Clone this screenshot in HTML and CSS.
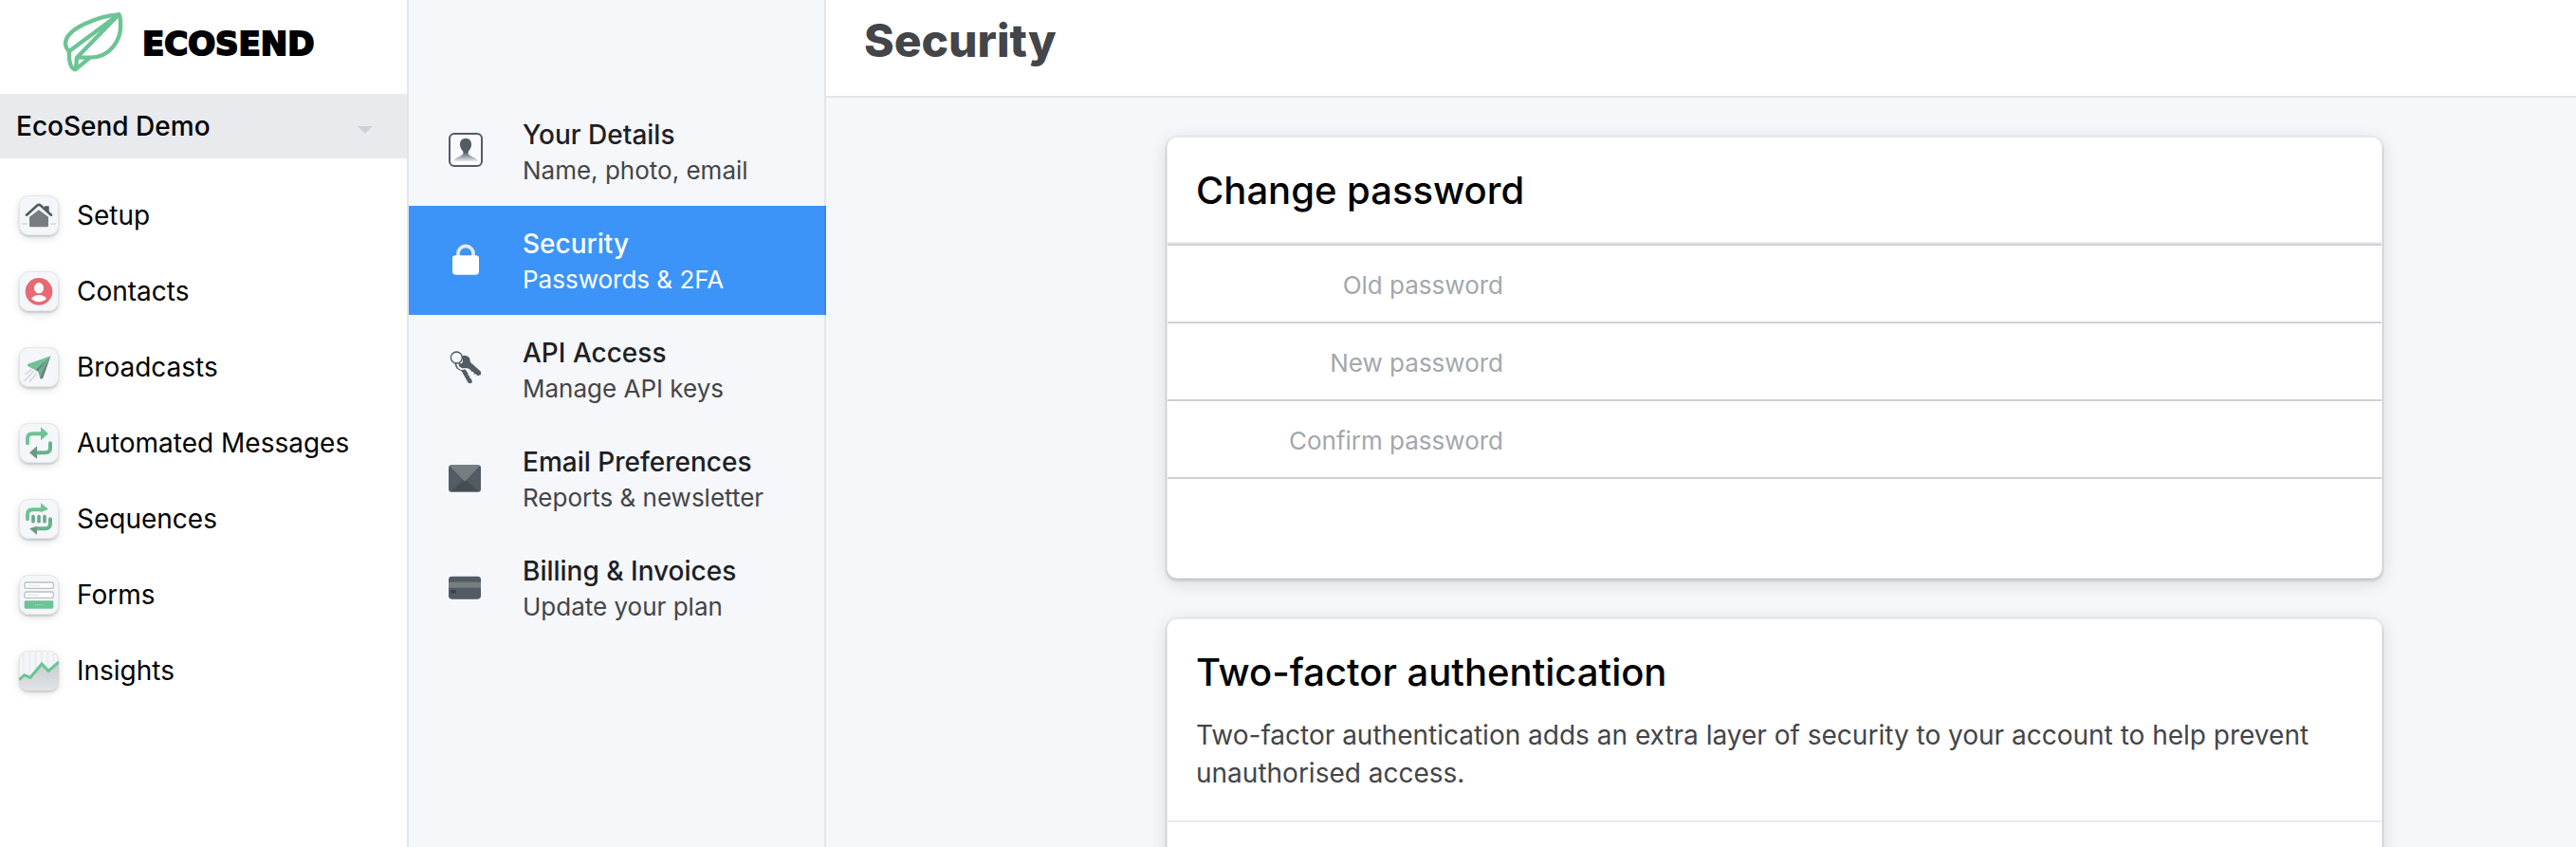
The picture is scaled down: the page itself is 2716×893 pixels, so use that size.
FILE: index.html
```html
<!DOCTYPE html>
<html lang="en">
<head>
    <meta charset="UTF-8">
    <meta name="viewport" content="width=device-width, initial-scale=1.0">
    <title>Security - EcoSend</title>
    <link rel="stylesheet" href="styles.css">
</head>
<body>
    <aside class="sidebar">
        <a href="#" class="logo">
            <svg class="logo-leaf" viewBox="198 32 192 192" aria-hidden="true">
                <path d="M376 42C318 46 206 84 207 135C208 148 214 154 219 160C217 186 223 214 238 216L285 178C346 178 386 124 381 68C381 54 379 46 376 42Z"/>
                <path d="M219 158L376 42L243 178H285M243 178L240 214"/>
            </svg>
            <span class="logo-text">ECOSEND</span>
        </a>

        <button type="button" class="account">
            <span>EcoSend Demo</span>
            <span class="caret"></span>
        </button>

        <nav class="main-nav">
            <a href="#">
                <svg class="tile" viewBox="0 0 126 126" aria-hidden="true">
                    <path d="M9 90H26M100 90H117" stroke="#cfd5d8" stroke-width="5"/>
                    <path d="M33 68L63 46L93 68V96Q93 100 89 100H37Q33 100 33 96Z" fill="#767e80"/>
                    <path d="M24 62L57 32Q63 27 69 32L102 62" fill="none" stroke="#535b65" stroke-width="8" stroke-linecap="round"/>
                    <path d="M81 34H95V54L81 42Z" fill="#535b65"/>
                </svg>
                Setup
            </a>
            <a href="#">
                <svg class="tile" viewBox="0 0 126 126" aria-hidden="true">
                    <circle cx="63" cy="64" r="43" fill="#e66a74"/>
                    <ellipse cx="63" cy="53" rx="15" ry="17" fill="#fff"/>
                    <path d="M39 86Q46 76 63 75Q80 76 87 86Q78 96 63 97Q48 96 39 86Z" fill="#fff"/>
                </svg>
                Contacts
            </a>
            <a href="#">
                <svg class="tile" viewBox="0 0 126 126" aria-hidden="true">
                    <path d="M40 70L20 86M46 76L16 108M56 84L32 110" stroke="#d5d9dd" stroke-width="5"/>
                    <path d="M100 28L27 54Q25 58 29 61L51 72Z" fill="#6cc495"/>
                    <path d="M100 28L51 72L62 78Z" fill="#767e80"/>
                    <path d="M100 28L60 76L67 98Q71 103 76 97Z" fill="#64b58c"/>
                    <path d="M100 28L72 82L67 98Q71 103 76 97Z" fill="#767e80"/>
                </svg>
                Broadcasts
            </a>
            <a href="#">
                <svg class="tile" viewBox="0 0 126 126" aria-hidden="true">
                    <path d="M27 64V50Q27 34 43 34H70" fill="none" stroke="#6cc495" stroke-width="12" stroke-linecap="round"/>
                    <path d="M69 13L93 34L69 55Z" fill="#6cc495"/>
                    <path d="M99 64V78Q99 94 83 94H56" fill="none" stroke="#67b38c" stroke-width="12" stroke-linecap="round"/>
                    <path d="M57 73L33 94L57 114Z" fill="#6f9986"/>
                </svg>
                Automated Messages
            </a>
            <a href="#">
                <svg class="tile" viewBox="0 0 126 126" aria-hidden="true">
                    <path d="M27 64V50Q27 34 43 34H70" fill="none" stroke="#6cc495" stroke-width="12" stroke-linecap="round"/>
                    <path d="M69 13L93 33L69 42Z" fill="#6cc495"/>
                    <path d="M99 64V78Q99 94 83 94H56" fill="none" stroke="#67b38c" stroke-width="12" stroke-linecap="round"/>
                    <path d="M57 86L33 94L57 114Z" fill="#6f9986"/>
                    <path d="M45 56V71M63 56V71M81 56V71" stroke="#6fa78b" stroke-width="11" stroke-linecap="round"/>
                </svg>
                Sequences
            </a>
            <a href="#">
                <svg class="tile" viewBox="0 0 126 126" aria-hidden="true">
                    <rect x="18" y="24" width="91" height="19" rx="5" fill="#fff" stroke="#b8c0c3" stroke-width="4"/>
                    <rect x="18" y="54" width="91" height="19" rx="5" fill="#fff" stroke="#b8c0c3" stroke-width="4"/>
                    <path d="M27 34H68M27 64H62" stroke="#e8e9ec" stroke-width="5"/>
                    <rect x="17" y="82" width="92" height="25" rx="4" fill="#6cc495"/>
                    <path d="M50 95H79" stroke="#c4e6d4" stroke-width="3" stroke-dasharray="3 4"/>
                </svg>
                Forms
            </a>
            <a href="#">
                <svg class="tile" viewBox="0 0 126 126" aria-hidden="true">
                    <defs>
                        <linearGradient id="chart-area" x1="0" y1="0" x2="0" y2="1">
                            <stop offset="0" stop-color="#c6cbcd"/>
                            <stop offset="1" stop-color="#e2e4e6"/>
                        </linearGradient>
                    </defs>
                    <path d="M15 0V126M34 0V126M53 0V126M72 0V126M91 0V126M110 0V126" stroke="#eceef1" stroke-width="8"/>
                    <path d="M0 92L17 77L36 85L72 42L93 64L126 36V126H0Z" fill="url(#chart-area)"/>
                    <path d="M0 92L17 77L36 85L72 42L93 64L126 36" fill="none" stroke="#6cc495" stroke-width="9"/>
                </svg>
                Insights
            </a>
        </nav>
    </aside>

    <nav class="settings-nav">
        <a href="#">
            <svg class="nav-icon" viewBox="0 0 108 120" aria-hidden="true">
                <defs>
                    <linearGradient id="shoulders" x1="0" y1="0" x2="0" y2="1">
                        <stop offset="0.6" stop-color="#535b65"/>
                        <stop offset="1" stop-color="#535b65" stop-opacity="0.1"/>
                    </linearGradient>
                </defs>
                <rect x="3" y="3" width="102" height="102" rx="15" fill="#f9fafc" stroke="#535b65" stroke-width="6"/>
                <path d="M54 18C42 18 35 26 36 39C37 49 42 55 46 59V67Q42 73 30 77Q18 80 18 90H90Q90 80 78 77Q66 73 62 67V59C66 55 71 49 72 39C73 26 66 18 54 18Z" fill="url(#shoulders)"/>
            </svg>
            <span class="nav-text"><strong>Your Details</strong><small>Name, photo, email</small></span>
        </a>
        <a href="#" class="active">
            <svg class="nav-icon" viewBox="0 0 108 120" aria-hidden="true">
                <path d="M30 46V37A24 24 0 0 1 78 37V46" fill="none" stroke="#e3ecf7" stroke-width="11"/>
                <rect x="12" y="43" width="84" height="61" rx="10" fill="#fff"/>
            </svg>
            <span class="nav-text"><strong>Security</strong><small>Passwords &amp; 2FA</small></span>
        </a>
        <a href="#">
            <svg class="nav-icon" viewBox="0 0 108 120" aria-hidden="true">
                <path d="M36 60L52 57L62 72L61 76L66 79L66 84L71 88L75 98L70 103L62 101L42 65Z" fill="#535b65"/>
                <path d="M22 36Q22 55 38 60" fill="none" stroke="#535b65" stroke-width="5"/>
                <path d="M40 17Q56 10 66 22L69 36L102 65V75L92 79L86 73L82 74L78 66L72 65L69 59L60 55Q44 60 33 48L31 38L42 40Q49 31 40 17Z" fill="#535b65"/>
                <circle cx="25" cy="21" r="18" fill="none" stroke="#535b65" stroke-width="4"/>
                <path d="M29 43Q29 55 40 58L58 56" fill="none" stroke="#f5f7fb" stroke-width="4"/>
            </svg>
            <span class="nav-text"><strong>API Access</strong><small>Manage API keys</small></span>
        </a>
        <a href="#">
            <svg class="nav-icon" viewBox="0 0 108 120" aria-hidden="true">
                <rect x="0" y="16" width="102" height="85" rx="9" fill="#535b65"/>
                <path d="M8 98L51 60L94 98Z" fill="#464c52"/>
                <path d="M4 19Q7 16 11 16H91Q95 16 98 19L51 68Z" fill="#767e80"/>
            </svg>
            <span class="nav-text"><strong>Email Preferences</strong><small>Reports &amp; newsletter</small></span>
        </a>
        <a href="#">
            <svg class="nav-icon" viewBox="0 0 108 120" aria-hidden="true">
                <rect x="0" y="23" width="102" height="72" rx="10" fill="#535b65"/>
                <rect x="0" y="41" width="102" height="18" fill="#767e80"/>
                <rect x="6" y="65" width="18" height="12" rx="6" fill="#3c3f42"/>
            </svg>
            <span class="nav-text"><strong>Billing &amp; Invoices</strong><small>Update your plan</small></span>
        </a>
    </nav>

    <main class="page">
        <header class="page-header">
            <h1>Security</h1>
        </header>

        <div class="content">
            <form class="card">
                <div class="card-header">
                    <h2>Change password</h2>
                </div>
                <div class="form-row">
                    <label for="old_password">Old password</label>
                    <input type="password" id="old_password">
                </div>
                <div class="form-row">
                    <label for="new_password">New password</label>
                    <input type="password" id="new_password">
                </div>
                <div class="form-row">
                    <label for="confirm_password">Confirm password</label>
                    <input type="password" id="confirm_password">
                </div>
                <div class="form-footer"></div>
            </form>

            <section class="card">
                <div class="card-header">
                    <h2>Two-factor authentication</h2>
                    <p>Two-factor authentication adds an extra layer of security to your account to help prevent unauthorised access.</p>
                </div>
                <div class="card-body"></div>
            </section>
        </div>
    </main>
</body>
</html>
```
FILE: styles.css
```css
* {
    box-sizing: border-box;
}

body {
    margin: 0;
    display: flex;
    height: 100vh;
    overflow: hidden;
    font-family: Inter, "Liberation Sans", sans-serif;
    font-size: 28px;
    color: #000;
    background-color: #f5f7fb;
}

a {
    color: inherit;
    text-decoration: none;
}

h1, h2, p {
    margin: 0;
}

/* Sidebar */
.sidebar {
    flex: 0 0 431px;
    background: white;
    border-right: 2px solid #e4e5e8;
}

.logo {
    display: flex;
    align-items: center;
    gap: 20px;
    height: 99px;
    padding: 0 0 12px 66px;
}

.logo-leaf {
    width: 64px;
    height: 64px;
    fill: none;
    stroke: #6cc495;
    stroke-width: 13;
    stroke-linejoin: round;
}

.logo-text {
    padding-top: 4px;
    font-family: "DejaVu Sans", sans-serif;
    font-size: 34px;
    line-height: 40px;
    font-weight: 700;
    -webkit-text-stroke: 2px #000;
}

.account {
    display: flex;
    justify-content: space-between;
    align-items: center;
    width: 100%;
    height: 68px;
    padding: 0 36px 0 17px;
    border: none;
    background: #e9eaee;
    color: #000;
    font: inherit;
    font-weight: 500;
    cursor: pointer;
}

.caret {
    margin-top: 8px;
    border: 8px solid transparent;
    border-top-color: #cdd1d6;
    border-bottom: 0;
}

.main-nav {
    padding-top: 20px;
}

.main-nav a {
    display: flex;
    align-items: center;
    gap: 19px;
    height: 80px;
    padding-left: 20px;
}

.tile {
    width: 42px;
    height: 42px;
    border-radius: 10px;
    background: #f5f6fa;
    box-shadow: inset 0 0 0 1px #e4e6ea, 0 2px 2px #c9cdd1, 0 3px 10px rgba(0, 0, 0, 0.12);
}

/* Settings menu */
.settings-nav {
    flex: 0 0 440px;
    padding-top: 102px;
    border-right: 2px solid #e4e5e8;
}

.settings-nav a {
    display: flex;
    align-items: center;
    gap: 42px;
    height: 115px;
    padding-left: 42px;
}

.settings-nav .active {
    margin-right: -2px;
    background: #3d94f8;
    border-right: 2px solid #3a87e0;
    color: white;
}

.nav-icon {
    width: 36px;
    height: 40px;
}

.nav-text {
    padding-top: 2px;
    line-height: 38px;
}

.nav-text strong {
    display: block;
    font-weight: 500;
    color: #1d2024;
}

.nav-text small {
    display: block;
    font-size: 26px;
    color: #434548;
}

.settings-nav .active strong, .settings-nav .active small {
    color: white;
}

/* Page */
.page {
    flex: 1;
    overflow: hidden;
}

.page-header {
    height: 103px;
    padding: 14px 40px;
    background: white;
    border-bottom: 2px solid #e4e5e8;
}

.page-header h1 {
    font-size: 48px;
    line-height: 58px;
    font-weight: 800;
    color: #434548;
}

.content {
    display: flex;
    flex-direction: column;
    align-items: center;
    gap: 40px;
    padding: 40px 0 40px 155px;
}

.card {
    width: 100%;
    max-width: 1284px;
    background: white;
    background-clip: padding-box;
    border: 2px solid rgba(0, 0, 0, 0.04);
    border-radius: 12px;
    box-shadow: 0 2px 2px rgba(0, 0, 0, 0.1), 0 4px 18px rgba(0, 0, 0, 0.12);
}

.card-header {
    padding: 32px 30px 30px;
    border-bottom: 2px solid #e9eaee;
}

.card-header h2 {
    font-size: 40px;
    line-height: 48px;
    font-weight: 500;
}

.card-header p {
    margin-top: 22px;
    line-height: 40px;
    color: #434548;
}

.card-body {
    height: 60px;
}

.form-row {
    display: flex;
    align-items: center;
    height: 82px;
    border-top: 2px solid #cdd1d6;
}

.form-row label {
    width: 30%;
    padding: 2px 30px 0 0;
    text-align: right;
    font-size: 26px;
    color: #a2a8ae;
}

.form-row input {
    flex: 1;
    height: 80px;
    border: none;
    outline: none;
    background: none;
    font: inherit;
}

.form-footer {
    height: 106px;
    border-top: 2px solid #cdd1d6;
}
```
